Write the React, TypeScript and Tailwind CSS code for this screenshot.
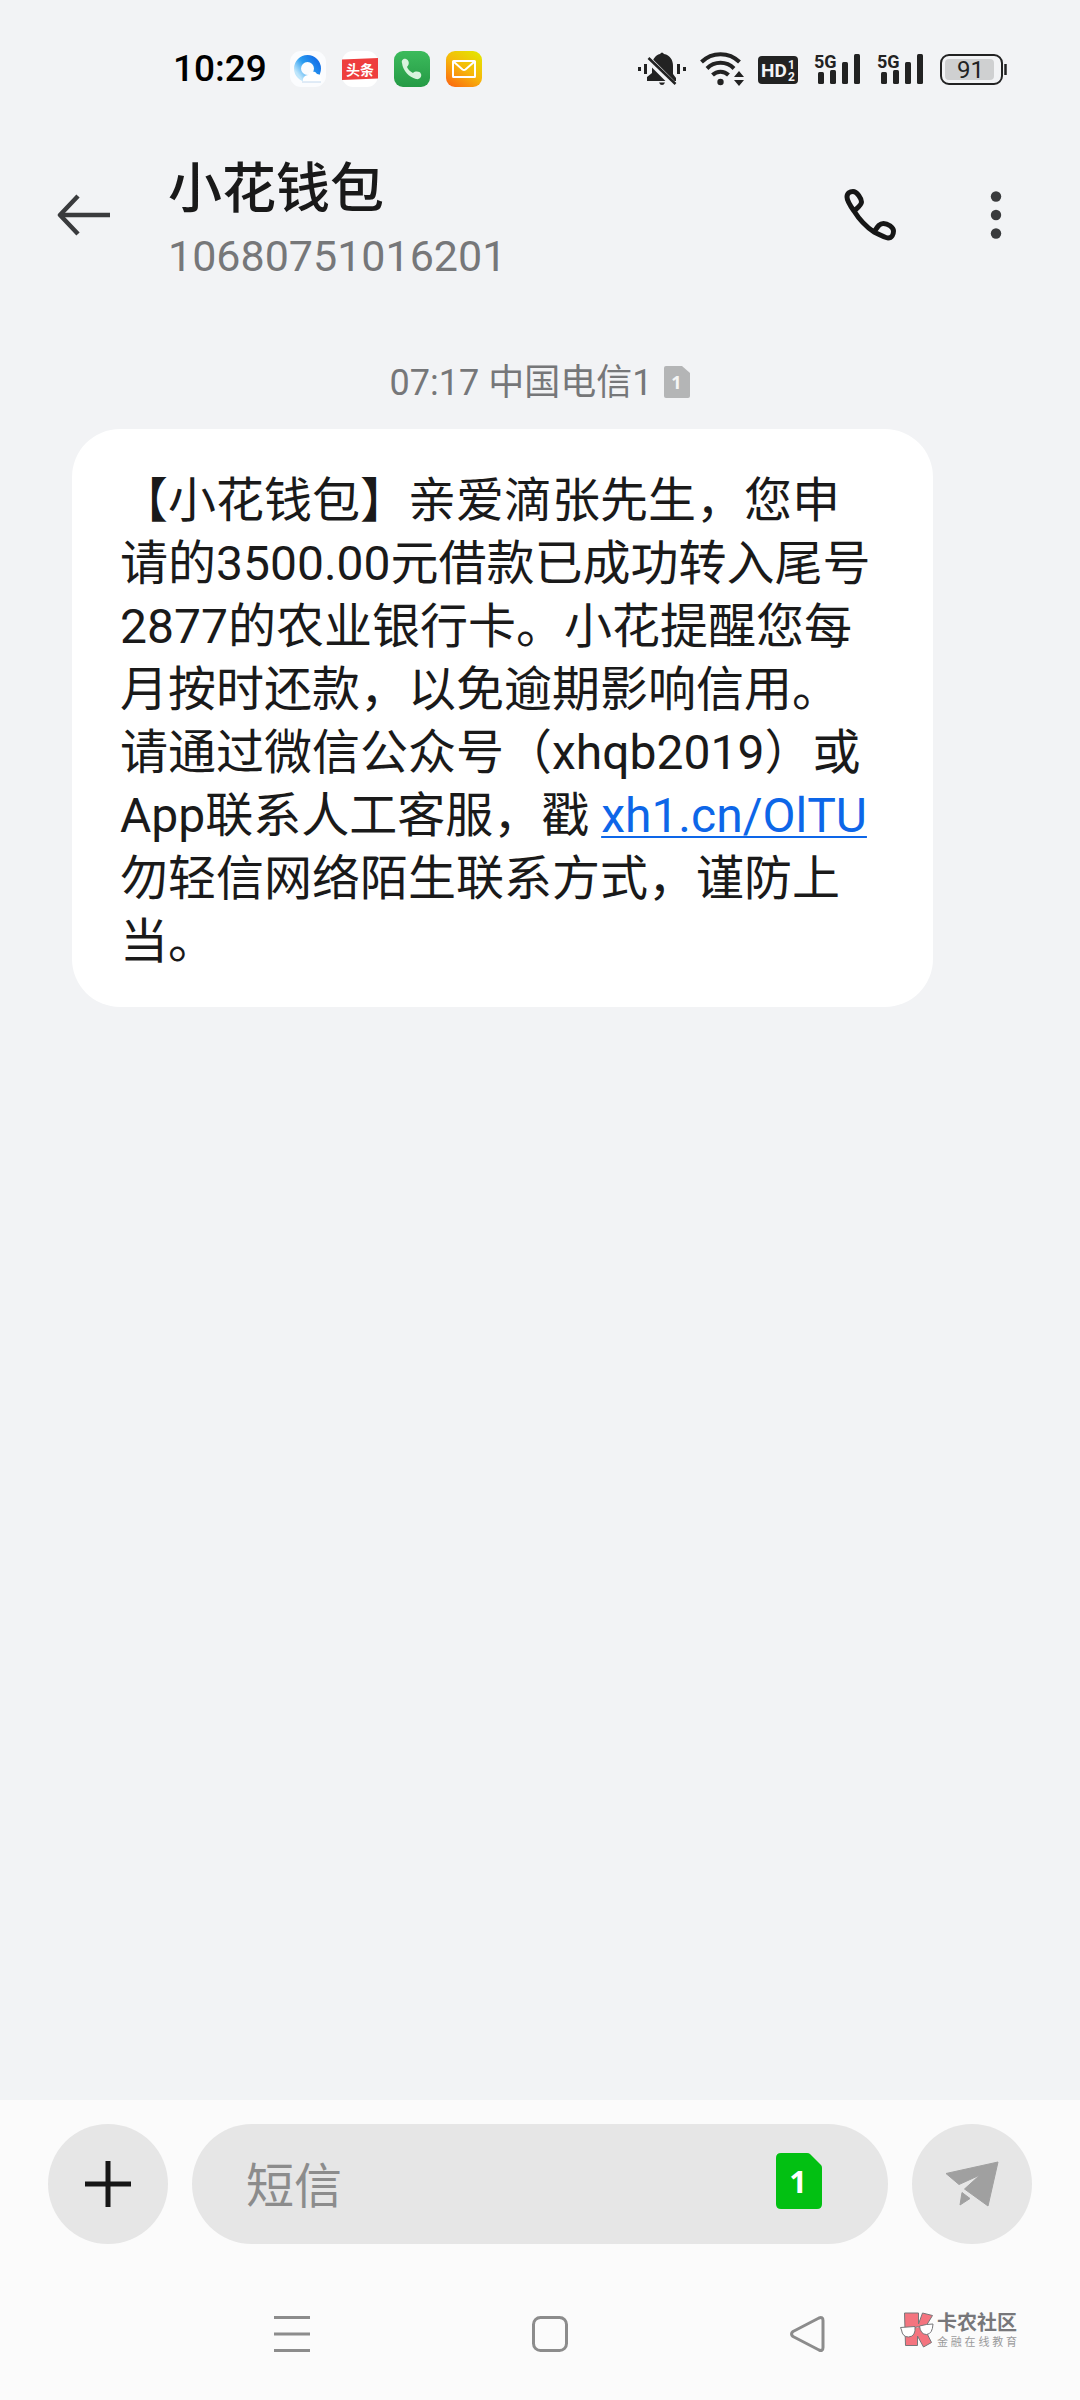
import React from "react";

function StatusBar() {
  return (
    <div className="flex h-[138px] items-center justify-between pl-[173px] pr-[72px]">
      <div className="flex items-center gap-4">
        <span className="w-[101px] font-['Roboto',sans-serif] text-[37px] font-medium leading-9 text-black">10:29</span>
        <BrowserIcon />
        <NewsIcon />
        <CallAppIcon />
        <MailIcon />
      </div>
      <div className="flex items-center text-[#222]">
        <BellOffIcon />
        <WifiIcon />
        <HdIcon />
        <SignalIcon />
        <SignalIcon />
        <BatteryIcon />
      </div>
    </div>
  );
}

function BrowserIcon() {
  return (
    <svg viewBox="0 0 36 36" className="size-9" aria-hidden="true">
      <defs>
        <linearGradient id="ring" x1="1" y1="0.2" x2="0.1" y2="0.9">
          <stop offset="0" stopColor="#1673e8" />
          <stop offset="0.5" stopColor="#2a9df0" />
          <stop offset="1" stopColor="#bfe6fb" />
        </linearGradient>
      </defs>
      <rect width="36" height="36" rx="11" fill="#fbfcfe" />
      <circle cx="17.5" cy="17.5" r="10" fill="none" stroke="url(#ring)" strokeWidth="7" />
      <path d="M13 31c-1-4 2-7 5-7 1-4 7-5 9-1 4 0 5 4 4 8Z" fill="#fff" />
      <path d="M12 31h19" stroke="#c3d8ee" strokeWidth="1" />
    </svg>
  );
}

function NewsIcon() {
  return (
    <svg viewBox="0 0 36 36" className="size-9" role="img" aria-label="头条">
      <rect width="36" height="36" rx="11" fill="#fff" />
      <path d="M0 8.500 36 7v20.500L0 29Z" fill="#ee3e3e" />
      <text x="18" y="23.500" textAnchor="middle" fontSize="14" fontWeight="700" fill="#fff" fontFamily="Noto Sans CJK SC, sans-serif">头条</text>
    </svg>
  );
}

function CallAppIcon() {
  return (
    <svg viewBox="0 0 36 36" className="size-9" aria-hidden="true">
      <defs>
        <linearGradient id="green" x1="0" y1="0" x2="0" y2="1">
          <stop offset="0" stopColor="#3cbb5c" />
          <stop offset="1" stopColor="#259a45" />
        </linearGradient>
      </defs>
      <rect width="36" height="36" rx="9" fill="url(#green)" />
      <path d="M8 12c-1-3 2-5 4-4 3 1 4 5 1 8 1 3 4 5 6 6 2-2 7-2 8 1 1 2-1 6-5 5C15 26 9 20 8 12Z" fill="#d8f3dd" />
    </svg>
  );
}

function MailIcon() {
  return (
    <svg viewBox="0 0 36 36" className="size-9" aria-hidden="true">
      <defs>
        <linearGradient id="mail" x1="0.85" y1="0" x2="0.2" y2="1">
          <stop offset="0" stopColor="#e3e500" />
          <stop offset="0.5" stopColor="#f6b80a" />
          <stop offset="1" stopColor="#fb6d10" />
        </linearGradient>
      </defs>
      <rect width="36" height="36" rx="9" fill="url(#mail)" />
      <g fill="none" stroke="#fff" strokeWidth="2">
        <rect x="7" y="10" width="22" height="16" rx="0.5" />
        <path d="m8 11 8.500 7.500q1.500 1 3 0L28 11" />
      </g>
    </svg>
  );
}

function BellOffIcon() {
  return (
    <svg viewBox="0 0 48 36" className="h-9 w-12" fill="currentColor" aria-hidden="true">
      <path d="M22 3q2-3 4 0c6 1 9 6 9 12v8l3 4v3H9v-4l5-4v-7c0-6 3-11 8-12Z" />
      <path d="M21 31.500h6q-1 2.500-3 2.500t-3-2.500Z" />
      <path d="M8 6 36 34" stroke="#f2f3f5" strokeWidth="6.500" />
      <path d="M10.500 7 37.500 33" stroke="currentColor" strokeWidth="2.600" />
      <path d="M0 16h3v4H0zM6 13h3v10H6zM39 13h3v10h-3zM45 16h3v4h-3z" />
    </svg>
  );
}

function WifiIcon() {
  return (
    <svg viewBox="0 0 44 36" className="ml-[14px] h-9 w-11" aria-hidden="true">
      <g fill="none" stroke="currentColor" strokeWidth="4">
        <path d="M1.500 11a27 27 0 0 1 38 0" />
        <path d="M7 17.500a19 19 0 0 1 27 0" />
        <path d="M12.500 24a11.500 11.500 0 0 1 16 0" />
      </g>
      <circle cx="20.500" cy="31" r="3.200" fill="currentColor" />
      <path d="m39 20 5 6H34Zm0 15 5-6H34Z" fill="currentColor" />
    </svg>
  );
}

function HdIcon() {
  return (
    <svg viewBox="0 0 40 36" className="ml-[14px] h-9 w-10" role="img" aria-label="HD 1 2">
      <rect y="5" width="40" height="28" rx="4" fill="currentColor" />
      <g fill="#f2f3f5" fontFamily="Roboto, sans-serif" fontWeight="700">
        <text x="3" y="26" fontSize="19">HD</text>
        <text x="30" y="18" fontSize="12">1</text>
        <text x="30" y="30" fontSize="12">2</text>
      </g>
    </svg>
  );
}

function SignalIcon() {
  return (
    <svg viewBox="0 0 47 36" className="ml-4 h-9 w-[47px]" role="img" aria-label="5G">
      <g fill="currentColor">
        <text x="0" y="17" fontSize="18" fontFamily="Roboto, sans-serif" fontWeight="700">5G</text>
        <rect x="4" y="21" width="6" height="12" rx="1.500" />
        <rect x="16" y="19" width="6" height="14" rx="1.500" />
        <rect x="28" y="11" width="6" height="22" rx="1.500" />
        <rect x="40" y="3" width="6" height="30" rx="1.500" />
      </g>
    </svg>
  );
}

function BatteryIcon() {
  return (
    <svg viewBox="0 0 68 36" className="ml-4 h-9 w-[68px]" role="img" aria-label="91%">
      <rect x="1" y="4" width="61" height="29" rx="8" fill="none" stroke="currentColor" strokeWidth="2" />
      <rect x="5" y="8" width="49" height="21" rx="4" fill="#cfd0d1" />
      <path d="M65.500 13v11" stroke="currentColor" strokeWidth="2.500" />
      <text x="30.500" y="27" textAnchor="middle" fontSize="24" fontFamily="Roboto, sans-serif" fill="currentColor">91</text>
    </svg>
  );
}

function Header() {
  return (
    <header className="flex h-[154px] items-center px-12">
      <button type="button" aria-label="返回" className="flex size-[72px] items-center justify-center">
        <svg viewBox="0 0 54 42" className="h-[42px] w-[54px]" fill="none" stroke="#3a3b3d" strokeWidth="4.500" aria-hidden="true">
          <path d="M3 21h50" />
          <path d="M21 2 3 21l18 19" strokeLinejoin="round" />
        </svg>
      </button>
      <div className="ml-12 flex-1 pt-[10px]">
        <h1 className="text-[54px] font-medium leading-[72px] text-[#191919]">小花钱包</h1>
        <p className="text-[43px] leading-[60px] text-[#767779]">10680751016201</p>
      </div>
      <button type="button" aria-label="拨打电话" className="flex size-[72px] items-center justify-center">
        <svg viewBox="0 0 52 52" className="size-[52px]" fill="none" stroke="#161616" strokeWidth="5" strokeLinejoin="round" aria-hidden="true">
          <path d="M10 22C5 15 3 11 3 8c0-4 3-5.500 6-5.500 4 0 8.500 7 8.500 10.500 0 3-4 6-7.500 9C15 30 21 37 30 43c8 4 12 6 14 6 4 0 5.500-4 5.500-7 0-4-6-7.500-10-7.500S34 37 30 43" />
        </svg>
      </button>
      <button type="button" aria-label="更多" className="ml-[54px] flex size-[72px] items-center justify-center">
        <svg viewBox="0 0 12 48" className="h-12 w-3" fill="#3a3b3d" aria-hidden="true">
          <circle cx="6" cy="5.500" r="5.200" />
          <circle cx="6" cy="24" r="5.200" />
          <circle cx="6" cy="42.500" r="5.200" />
        </svg>
      </button>
    </header>
  );
}

function Conversation() {
  return (
    <main className="flex-1 px-[72px] pt-[63px]">
      <div className="mb-[17px] flex items-center justify-center gap-3 text-[36px] leading-[57px] text-[#767779]">
        <span>07:17 中国电信1</span>
        <svg viewBox="0 0 26 32" className="mb-1 h-8 w-[26px]" role="img" aria-label="SIM 1">
          <path d="M2 0h16l8 7v23q0 2-2 2H2q-2 0-2-2V2q0-2 2-2Z" fill="#b4b5b6" />
          <text x="12.500" y="23" textAnchor="middle" fontSize="18" fontWeight="700" fill="#f5f5f5" fontFamily="Open Sans, sans-serif">1</text>
        </svg>
      </div>
      <p className="w-[92%] rounded-[48px] bg-white px-12 pb-[34px] pt-10 text-[48px] leading-[63px] text-[#1a1a1a]">
        【小花钱包】亲爱滴张先生，您申请的3500.00元借款已成功转入尾号2877的农业银行卡。小花提醒您每月按时还款，以免逾期影响信用。请通过微信公众号（xhqb2019）或App联系人工客服，戳{" "}
        <a href="#link" className="text-[#0d66e8] underline decoration-2 underline-offset-4">xh1.cn/OlTU</a>
        {" "}勿轻信网络陌生联系方式，谨防上当。
      </p>
    </main>
  );
}

function Composer() {
  return (
    <form className="flex items-center gap-6 px-12 pt-6" onSubmit={(e) => e.preventDefault()}>
      <button type="button" aria-label="添加" className="flex size-[120px] shrink-0 items-center justify-center rounded-full bg-[#e6e6e6]">
        <svg viewBox="0 0 46 46" className="size-[46px]" stroke="#161616" strokeWidth="5" aria-hidden="true">
          <path d="M23 0v46M0 23h46" />
        </svg>
      </button>
      <div className="flex h-[120px] min-w-0 flex-1 items-center rounded-full bg-[#e6e6e6] pl-[54px] pr-[66px]">
        <input aria-label="短信" placeholder="短信" className="min-w-0 flex-1 bg-transparent pt-[6px] text-[48px] leading-[72px] text-[#1a1a1a] outline-none placeholder:text-[#8c8c8c]" />
        <button type="button" aria-label="SIM 1">
          <svg viewBox="0 0 46 56" className="mb-[6px] h-14 w-[46px]" aria-hidden="true">
            <path d="M5 0h26q2 0 3 1l11 11q1 1 1 3v36q0 5-5 5H5q-5 0-5-5V5q0-5 5-5Z" fill="#02c012" />
            <text x="22" y="40" textAnchor="middle" fontSize="31" fontWeight="700" fill="#fff" fontFamily="Open Sans, sans-serif">1</text>
          </svg>
        </button>
      </div>
      <button type="submit" aria-label="发送" className="flex size-[120px] shrink-0 items-center justify-center rounded-full bg-[#e6e6e6]">
        <svg viewBox="0 0 54 46" className="h-[46px] w-[54px]" fill="#a0a0a0" stroke="#a0a0a0" strokeLinejoin="round" aria-hidden="true">
          <path d="M1 12.500 53 1 43 45 19.500 28 35 14 14 23.500Z" />
          <path d="M17 31.500 25 37.500 15 44Z" />
        </svg>
      </button>
    </form>
  );
}

function SystemNav() {
  return (
    <div className="relative">
      <nav className="grid h-[156px] grid-cols-3 items-center pl-[163px] pr-[143px] pt-6">
        <button type="button" aria-label="最近任务" className="justify-self-center">
          <svg viewBox="0 0 36 36" className="size-9" stroke="#8c8c8c" strokeWidth="3" aria-hidden="true">
            <path d="M0 1.500h36M0 18h36M0 34.500h36" />
          </svg>
        </button>
        <button type="button" aria-label="主屏幕" className="justify-self-center">
          <svg viewBox="0 0 36 36" className="size-9" fill="none" stroke="#8c8c8c" strokeWidth="3" aria-hidden="true">
            <rect x="1.500" y="1.500" width="33" height="33" rx="7" />
          </svg>
        </button>
        <button type="button" aria-label="返回上一页" className="justify-self-center">
          <svg viewBox="0 0 36 36" className="size-9" fill="none" stroke="#8c8c8c" strokeWidth="3" strokeLinejoin="round" aria-hidden="true">
            <path d="M3 15.500 29 2q4-1.500 4 2.500v27q0 4-4 2.500L3 20.500q-3-2.500 0-5Z" />
          </svg>
        </button>
      </nav>
      <div className="absolute right-[63px] top-[67px] flex items-center gap-[3px]">
        <svg viewBox="0 0 34 36" className="h-9 w-[34px]" stroke="#77777a" aria-hidden="true">
          <path d="M4.500 1h14v11l4-11 10 2.500-8 13 7 14-8 4.500-6-11v9.500H5.500Z" fill="#f4747f" />
          <path d="M0.500 15.500 15 14.500q1 10-6.500 10.500-6 0-7-7ZM19.500 14q7-2 13.500-2-.5 10-6.500 10.500-6 0-7-8.500ZM15 16q2-2 4.500-1" fill="#fff" />
        </svg>
        <div className="font-['Noto_Sans_CJK_SC',sans-serif]">
          <p className="text-[20px] font-bold leading-[22px] text-[#77777a]">卡农社区</p>
          <p className="flex justify-between text-[11px] leading-4 text-[#9a9a9c]">
            {"金融在线教育".split("").map((c) => (
              <span key={c}>{c}</span>
            ))}
          </p>
        </div>
      </div>
    </div>
  );
}

export default function App() {
  return (
    <div lang="zh-CN" className="flex min-h-screen flex-col bg-[#f2f3f5] font-['Roboto','Noto_Sans_CJK_SC',sans-serif]">
      <StatusBar />
      <Header />
      <Conversation />
      <footer className="bg-[#fbfbfb]">
        <Composer />
        <SystemNav />
      </footer>
    </div>
  );
}
